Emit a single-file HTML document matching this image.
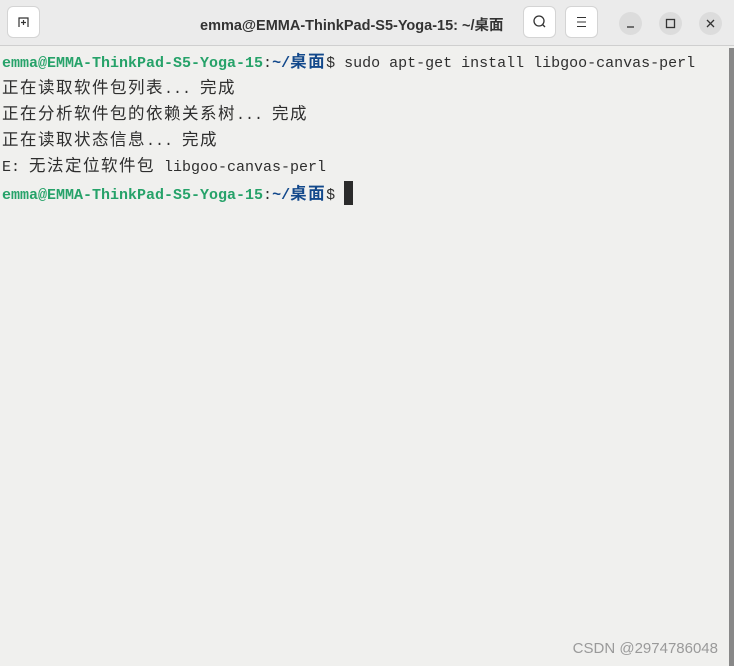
<!DOCTYPE html>
<html><head><meta charset="utf-8"><style>
body{margin:0;width:734px;height:666px;background:#f0f0ee;overflow:hidden;position:relative;font-family:"Liberation Sans",sans-serif}
.hdr{position:absolute;left:0;top:0;width:734px;height:45px;background:#ebebeb;border-bottom:1px solid #cfcfcf}
.btn{position:absolute;top:6px;width:33px;height:32px;border:1px solid #d4d4d4;border-radius:6px;background:#fff;box-sizing:border-box}
.circ{position:absolute;top:12px;width:23px;height:23px;border-radius:50%;background:#dcdcdc}
.title{position:absolute;left:200px;top:14px;font-weight:bold;font-size:14.5px;color:#333;font-family:"Liberation Sans","Noto Sans CJK SC",sans-serif;white-space:nowrap}
.term{position:absolute;left:2px;top:51px;font-family:"Liberation Mono","Noto Sans CJK SC",monospace;font-size:15px;line-height:25.9px;color:#2e2e2e;white-space:pre}
.c{font-family:"Noto Sans CJK SC",sans-serif;font-size:16.5px;letter-spacing:1.5px;line-height:0}
.g{color:#26a269;font-weight:bold}.b{color:#12488b;font-weight:bold}
.cur{display:inline-block;width:9px;height:24px;background:#2b2b2b;vertical-align:-6px}
.wm{position:absolute;right:16px;top:640px;font-size:15px;color:#9a9a9a}
.sb{position:absolute;right:0;top:48px;width:5px;height:618px;background:#888}
</style></head><body>
<div class="hdr">
<div class="btn" style="left:7px"><svg width="31" height="30"><path d="M11 20V11h9v9M13 15.5h5M15.5 13v5" stroke="#333" stroke-width="1.2" fill="none"/></svg></div>
<div class="title">emma@EMMA-ThinkPad-S5-Yoga-15: ~/桌面</div>
<div class="btn" style="left:523px"><svg width="31" height="30"><circle cx="15" cy="14" r="5" stroke="#333" stroke-width="1.3" fill="none"/><path d="M18.5 17.5l2.5 2.5" stroke="#333" stroke-width="1.3"/></svg></div>
<div class="btn" style="left:565px"><svg width="31" height="30"><path d="M11 10.5h9M11 15h9M11 19.5h9" stroke="#333" stroke-width="1.1"/></svg></div>
<div class="circ" style="left:619px"><svg width="23" height="23"><path d="M8 15h7" stroke="#333" stroke-width="1.3"/></svg></div>
<div class="circ" style="left:659px"><svg width="23" height="23"><rect x="7.5" y="7.5" width="8" height="8" stroke="#333" stroke-width="1.3" fill="none"/></svg></div>
<div class="circ" style="left:699px"><svg width="23" height="23"><path d="M8 8l7 7M15 8l-7 7" stroke="#333" stroke-width="1.3"/></svg></div>
</div>
<div class="term"><span class="g">emma@EMMA-ThinkPad-S5-Yoga-15</span>:<span class="b">~/<span class="c">桌面</span></span>$ sudo apt-get install libgoo-canvas-perl
<span class="c">正在读取软件包列表</span>... <span class="c">完成</span>
<span class="c">正在分析软件包的依赖关系树</span>... <span class="c">完成</span>
<span class="c">正在读取状态信息</span>... <span class="c">完成</span>
E: <span class="c">无法定位软件包</span> libgoo-canvas-perl
<span class="g">emma@EMMA-ThinkPad-S5-Yoga-15</span>:<span class="b">~/<span class="c">桌面</span></span>$ <span class="cur"></span></div>
<div class="sb"></div>
<div class="wm">CSDN @2974786048</div>
</body></html>
